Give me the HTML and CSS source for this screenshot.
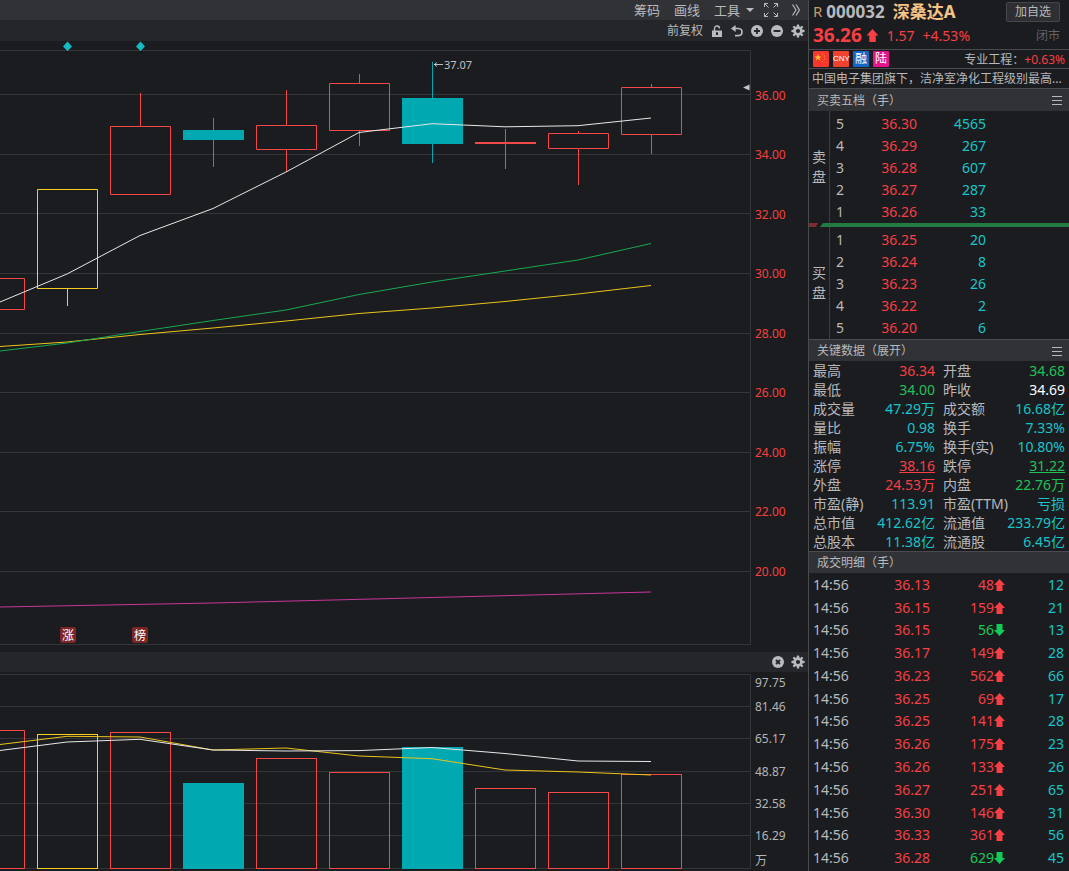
FILE: index.html
```html
<!DOCTYPE html>
<html lang="zh-CN">
<head>
<meta charset="utf-8">
<title>深桑达A 000032</title>
<link rel="stylesheet" href="styles.css">
</head>
<body>
<svg class="defs" aria-hidden="true">
  <symbol id="gear" viewBox="0 0 14 14">
    <g fill="currentColor">
      <rect x="5.8" y="0.4" width="2.4" height="13.2" rx="0.6"/>
      <rect x="5.8" y="0.4" width="2.4" height="13.2" rx="0.6" transform="rotate(45 7 7)"/>
      <rect x="5.8" y="0.4" width="2.4" height="13.2" rx="0.6" transform="rotate(90 7 7)"/>
      <rect x="5.8" y="0.4" width="2.4" height="13.2" rx="0.6" transform="rotate(135 7 7)"/>
      <circle cx="7" cy="7" r="4.7"/>
    </g>
    <circle cx="7" cy="7" r="2.1" fill="#25262a"/>
  </symbol>
  <symbol id="up" viewBox="0 0 11 12"><path d="M5.5 0L11 6H8.5V12H2.5V6H0Z" fill="currentColor"/></symbol>
  <symbol id="down" viewBox="0 0 11 12"><path d="M5.5 12L11 6H8.5V0H2.5V6H0Z" fill="currentColor"/></symbol>
  <symbol id="menu" viewBox="0 0 10 10"><path d="M0 1.5H10M0 5.5H10M0 9.5H10" stroke="currentColor"/></symbol>
</svg>
<div class="app">
  <main class="charts">
    <nav class="bar bar-top">
      <button>筹码</button>
      <button>画线</button>
      <button class="drop">工具<svg width="8" height="4" viewBox="0 0 8 4"><path d="M0 0H8L4 4Z" fill="currentColor"/></svg></button>
      <button aria-label="全屏"><svg width="14" height="14" viewBox="0 0 14 14" fill="none" stroke="currentColor"><path d="M0.5 4V0.5H4M10 0.5H13.5V4M13.5 10V13.5H10M4 13.5H0.5V10M0.5 0.5L4.5 4.5M13.5 0.5L9.5 4.5M13.5 13.5L9.5 9.5M0.5 13.5L4.5 9.5"/></svg></button>
      <button aria-label="更多"><svg width="8" height="12" viewBox="0 0 8 12" fill="none" stroke="currentColor" stroke-width="1.2"><path d="M0.5 0.5L4 6L0.5 11.5M4 0.5L7.5 6L4 11.5"/></svg></button>
    </nav>
    <div class="bar bar-sub">
      <button class="adjust">前复权</button>
      <button aria-label="锁定"><svg width="12" height="12" viewBox="0 0 12 12"><path d="M3.5 6V3.5Q3.5 1 6 1Q8.5 1 8.5 3.5" fill="none" stroke="currentColor" stroke-width="1.4"/><path fill-rule="evenodd" fill="currentColor" d="M1 5.5H11V12H1ZM5 7.3V10H7V7.3Z"/></svg></button>
      <button aria-label="撤销"><svg width="12" height="12" viewBox="0 0 12 12"><path d="M2 3.5H7.5Q11 3.8 11 7Q11 10.3 7.5 10.7H4" fill="none" stroke="currentColor" stroke-width="1.7"/><path d="M0 3.5L4.6 0V7Z" fill="currentColor"/></svg></button>
      <button aria-label="放大"><svg width="12" height="12" viewBox="0 0 12 12"><circle cx="6" cy="6" r="6" fill="currentColor"/><path d="M3 6H9M6 3V9" stroke="#25262a" stroke-width="1.8"/></svg></button>
      <button aria-label="缩小"><svg width="12" height="12" viewBox="0 0 12 12"><circle cx="6" cy="6" r="6" fill="currentColor"/><path d="M2.6 6H9.4" stroke="#25262a" stroke-width="2"/></svg></button>
      <button aria-label="设置"><svg width="14" height="14"><use href="#gear"/></svg></button>
    </div>
    <svg class="plot" viewBox="0 41 808 611" role="img" aria-label="K线图">
      <path class="grid" d="M0 50.5H750.5V644.5H0M0 94.5H750M0 154.5H750M0 213.5H750M0 273.5H750M0 333.5H750M0 392.5H750M0 452.5H750M0 511.5H750M0 571.5H750"/>
      <path class="mark" d="M67.5 41.5L72 46.5L67.5 51L63 46.5ZM140.5 41.5L145 46.5L140.5 51L136 46.5Z"/>
      <path class="pointer" d="M743 87.5L749.5 84.5V90.5Z"/>
      <g class="rise">
        <path d="M-1 278.5H24.5V309.5H-1"/>
        <path d="M110.5 126.5H170.5V194.5H110.5ZM140.5 93V126"/>
        <path d="M256.5 125.5H316.5V149.5H256.5ZM286.5 90V125M286.5 150V172"/>
        <path d="M329.5 83.5H389.5V130.5H329.5ZM359.5 74V83M359.5 131V146"/>
        <path d="M505.5 129V169"/>
        <path d="M475 143H536" stroke-width="2"/>
        <path d="M548.5 133.5H608.5V148.5H548.5ZM578.5 131V133M578.5 149V185"/>
        <path d="M621.5 87.5H681.5V134.5H621.5ZM651.5 84V87M651.5 135V154"/>
      </g>
      <path class="limit" d="M37.5 189.5H97.5V288.5H37.5ZM67.5 289V306"/>
      <g class="fall">
        <rect x="183" y="130" width="61" height="10"/><rect x="213" y="118" width="1" height="49"/>
        <rect x="402" y="98" width="61" height="46"/><rect x="432" y="62" width="1" height="101"/>
      </g>
      <polyline class="ma ma-pink" points="0,607 213,603 432,597.5 651,592"/>
      <polyline class="ma ma-yellow" points="0,346.5 67,342 140,334.5 213,328 286,321 359,313.5 432,308 505,301.5 578,294 651,285.5"/>
      <polyline class="ma ma-green" points="0,351 67,343 140,331.5 213,320.5 286,310 359,294.5 432,282 505,271 578,260 651,243.5"/>
      <polyline class="ma ma-white" points="0,302 67,274 140,235.5 213,208.5 286,172 359,132.5 432,123.7 505,126.8 578,125.7 651,118"/>
      <path class="arrow" d="M434 64.5H443M437 62.5L434.5 64.5L437 66.5"/>
      <text class="high" x="444" y="69">37.07</text>
      <g class="badge"><rect x="60" y="627" width="16" height="16" rx="2"/><text x="68" y="640">涨</text><rect x="132" y="627" width="16" height="16" rx="2"/><text x="140" y="640">榜</text></g>
      <g class="axis price">
        <text x="755" y="100">36.00</text><text x="755" y="159">34.00</text><text x="755" y="219">32.00</text>
        <text x="755" y="278">30.00</text><text x="755" y="338">28.00</text><text x="755" y="397">26.00</text>
        <text x="755" y="457">24.00</text><text x="755" y="516">22.00</text><text x="755" y="576">20.00</text>
      </g>
    </svg>
    <div class="bar bar-volume">
      <button aria-label="关闭"><svg width="12" height="12" viewBox="0 0 12 12"><circle cx="6" cy="6" r="6" fill="currentColor"/><path d="M4 4L8 8M8 4L4 8" stroke="#25262a" stroke-width="1.8"/></svg></button>
      <button aria-label="设置"><svg width="14" height="14"><use href="#gear"/></svg></button>
    </div>
    <svg class="plot" viewBox="0 672 808 199" role="img" aria-label="成交量">
      <path class="grid" d="M0 674.5H750.5V868.5H0M0 706.5H750M0 738.5H750M0 771.5H750M0 803.5H750M0 835.5H750"/>
      <g class="rise">
        <path d="M-1 730.5H24.5V868.5H-1"/>
        <rect x="110.5" y="732.5" width="60" height="136"/>
        <rect x="256.5" y="758.5" width="60" height="110"/>
        <rect x="329.5" y="772.5" width="60" height="96"/>
        <rect x="475.5" y="788.5" width="60" height="80"/>
        <rect x="548.5" y="792.5" width="60" height="76"/>
        <rect x="621.5" y="774.5" width="60" height="94"/>
      </g>
      <rect class="limit" x="37.5" y="734.5" width="60" height="134"/>
      <g class="fall"><rect x="183" y="783" width="61" height="86"/><rect x="402" y="747" width="61" height="122"/></g>
      <polyline class="ma ma-yellow" points="0,744.5 67,736.3 140,737 213,750 286,748 359,756 432,758.7 505,770 578,772 651,775"/>
      <polyline class="ma ma-white" points="0,750.5 67,742 140,739.3 213,750 286,751 359,750.6 432,747.5 505,753.5 578,761 651,761.5"/>
      <g class="axis">
        <text x="755" y="687">97.75</text><text x="755" y="711">81.46</text><text x="755" y="743">65.17</text>
        <text x="755" y="776">48.87</text><text x="755" y="808">32.58</text><text x="755" y="840">16.29</text><text x="755" y="865">万</text>
      </g>
    </svg>
  </main>

  <aside class="quote">
    <header class="head">
      <div class="line">
        <span class="flag-r">R</span><h1><span class="code">000032</span><span class="name">深桑达A</span></h1>
        <button class="add">加自选</button>
      </div>
      <div class="line red">
        <strong class="last">36.26</strong><svg class="big-up" width="13" height="13" viewBox="0 0 11 12"><use href="#up"/></svg>
        <span class="diff">1.57</span><span>+4.53%</span><span class="state">闭市</span>
      </div>
    </header>
    <div class="tags">
      <svg class="tag" width="16" height="16" viewBox="0 0 16 16" role="img" aria-label="中国"><rect width="16" height="16" rx="1" fill="#f8382f"/><path d="M5 3L6 5.5H8.5L6.5 7L7.2 9.5L5 8L2.8 9.5L3.5 7L1.5 5.5H4Z" fill="#ffc52b"/><path d="M9 2.5h1v1H9zM11 4.5h1v1H11zM11 7.5h1v1H11zM9 10h1v1H9z" fill="#ff9a2b"/></svg>
      <span class="tag cny">CNY</span><span class="tag rong">融</span><span class="tag lu">陆</span>
      <span class="industry">专业工程：</span><span class="red">+0.63%</span>
    </div>
    <p class="about">中国电子集团旗下，洁净室净化工程级别最高...</p>

    <h2 class="section">买卖五档（手）<button aria-label="菜单"><svg width="10" height="10"><use href="#menu"/></svg></button></h2>
    <div class="book">
      <div class="side">卖盘</div>
      <table>
        <tr><td>5</td><td class="red">36.30</td><td class="cyan">4565</td><td></td></tr>
        <tr><td>4</td><td class="red">36.29</td><td class="cyan">267</td><td></td></tr>
        <tr><td>3</td><td class="red">36.28</td><td class="cyan">607</td><td></td></tr>
        <tr><td>2</td><td class="red">36.27</td><td class="cyan">287</td><td></td></tr>
        <tr><td>1</td><td class="red">36.26</td><td class="cyan">33</td><td></td></tr>
      </table>
    </div>
    <svg class="ratio" height="4" role="img" aria-label="买卖力量对比"><rect width="100%" height="4" fill="#237b43"/><path d="M0 0H14L11 4H0Z" fill="#1b1c1f"/><path d="M0 0H9L7 4H0Z" fill="#7b2d33"/></svg>
    <div class="book">
      <div class="side">买盘</div>
      <table>
        <tr><td>1</td><td class="red">36.25</td><td class="cyan">20</td><td></td></tr>
        <tr><td>2</td><td class="red">36.24</td><td class="cyan">8</td><td></td></tr>
        <tr><td>3</td><td class="red">36.23</td><td class="cyan">26</td><td></td></tr>
        <tr><td>4</td><td class="red">36.22</td><td class="cyan">2</td><td></td></tr>
        <tr><td>5</td><td class="red">36.20</td><td class="cyan">6</td><td></td></tr>
      </table>
    </div>

    <h2 class="section">关键数据（展开）<button aria-label="菜单"><svg width="10" height="10"><use href="#menu"/></svg></button></h2>
    <table class="keys">
      <tr><th>最高</th><td class="red">36.34</td><th>开盘</th><td class="green">34.68</td></tr>
      <tr><th>最低</th><td class="green">34.00</td><th>昨收</th><td class="white">34.69</td></tr>
      <tr><th>成交量</th><td>47.29万</td><th>成交额</th><td>16.68亿</td></tr>
      <tr><th>量比</th><td>0.98</td><th>换手</th><td>7.33%</td></tr>
      <tr><th>振幅</th><td>6.75%</td><th>换手(实)</th><td>10.80%</td></tr>
      <tr><th>涨停</th><td class="red"><u>38.16</u></td><th>跌停</th><td class="green"><u>31.22</u></td></tr>
      <tr><th>外盘</th><td class="red">24.53万</td><th>内盘</th><td class="green">22.76万</td></tr>
      <tr><th>市盈(静)</th><td>113.91</td><th>市盈(TTM)</th><td>亏损</td></tr>
      <tr><th>总市值</th><td>412.62亿</td><th>流通值</th><td>233.79亿</td></tr>
      <tr><th>总股本</th><td>11.38亿</td><th>流通股</th><td>6.45亿</td></tr>
    </table>

    <h2 class="section">成交明细（手）</h2>
    <div class="trades-wrap">
    <table class="trades">
      <tr><td>14:56</td><td>36.13</td><td class="red">48<svg><use href="#up"/></svg></td><td>12</td></tr>
      <tr><td>14:56</td><td>36.15</td><td class="red">159<svg><use href="#up"/></svg></td><td>21</td></tr>
      <tr><td>14:56</td><td>36.15</td><td class="lime">56<svg><use href="#down"/></svg></td><td>13</td></tr>
      <tr><td>14:56</td><td>36.17</td><td class="red">149<svg><use href="#up"/></svg></td><td>28</td></tr>
      <tr><td>14:56</td><td>36.23</td><td class="red">562<svg><use href="#up"/></svg></td><td>66</td></tr>
      <tr><td>14:56</td><td>36.25</td><td class="red">69<svg><use href="#up"/></svg></td><td>17</td></tr>
      <tr><td>14:56</td><td>36.25</td><td class="red">141<svg><use href="#up"/></svg></td><td>28</td></tr>
      <tr><td>14:56</td><td>36.26</td><td class="red">175<svg><use href="#up"/></svg></td><td>23</td></tr>
      <tr><td>14:56</td><td>36.26</td><td class="red">133<svg><use href="#up"/></svg></td><td>26</td></tr>
      <tr><td>14:56</td><td>36.27</td><td class="red">251<svg><use href="#up"/></svg></td><td>65</td></tr>
      <tr><td>14:56</td><td>36.30</td><td class="red">146<svg><use href="#up"/></svg></td><td>31</td></tr>
      <tr><td>14:56</td><td>36.33</td><td class="red">361<svg><use href="#up"/></svg></td><td>56</td></tr>
      <tr><td>14:56</td><td>36.28</td><td class="lime">629<svg><use href="#down"/></svg></td><td>45</td></tr>
    </table>
    </div>
  </aside>
</div>
</body>
</html>
```

FILE: styles.css
```css
* { box-sizing: border-box; }
body {
  margin: 0;
  background: #1b1c1f;
  color: #b8b9bc;
  font: 14px/19px "Noto Sans", "Noto Sans CJK SC", sans-serif;
}
button {
  padding: 0;
  border: 0;
  background: none;
  color: inherit;
  font: inherit;
  display: flex;
  align-items: center;
}
svg { display: block; flex: none; }
.defs { position: absolute; width: 0; height: 0; }
.app { display: grid; grid-template-columns: minmax(0, 1fr) 261px; min-height: 100vh; }

/* charts */
.bar { display: flex; justify-content: flex-end; align-items: center; background: #25262a; color: #b9babd; }
.bar-top { height: 20px; gap: 14px; padding-right: 8px; background: #313236; font-size: 13px; }
.bar-top .drop { gap: 6px; margin-right: -4px; }
.bar-sub { height: 21px; gap: 8px; padding-right: 3px; font-size: 12px; }
.bar-volume { height: 20px; gap: 7px; padding-right: 3px; }
.plot { width: 100%; height: auto; }
.grid { fill: none; stroke: #343538; }
.mark { fill: #13bcc4; }
.pointer { fill: #c4c5c8; }
.rise { fill: none; stroke: #f24848; }
.limit { fill: none; stroke: #f6cf1f; }
.fall { fill: #00a9b2; }
.ma { fill: none; stroke-width: 1; }
.ma-white { stroke: #e8e8ea; }
.ma-yellow { stroke: #eac41c; }
.ma-green { stroke: #17a952; }
.ma-pink { stroke: #c9359a; }
.arrow { fill: none; stroke: #c0c1c4; }
.high { fill: #c0c1c4; font: 11px "Noto Sans", sans-serif; }
.badge rect { fill: #7a2628; }
.badge text { fill: #fff; font-size: 12px; text-anchor: middle; }
.axis { fill: #b4b5b8; font-size: 12px; }
.price { fill: #f5403f; }

/* quote panel */
.quote { display: flex; flex-direction: column; border-left: 1px solid #4a4b4f; }
.red { color: #f73f45; }
.cyan { color: #17c4c9; }
.green { color: #20c05a; }
.lime { color: #13cb58; }
.white { color: #fff; }
.head { height: 50px; padding: 0 9px 0 4px; border-bottom: 1px solid #4a4b4f; }
.line { display: flex; align-items: center; height: 23px; }
.line + .line { height: 25px; }
.flag-r { color: #c69a63; font-size: 15px; margin-right: 4px; }
h1 { display: flex; gap: 8px; margin: 0; font-size: 17px; }
.name { color: #f6c387; }
.add { margin-left: auto; height: 20px; padding: 0 8px; border: 1px solid #45464a; border-radius: 2px; background: #2e2f33; font-size: 12px; }
.last { font-size: 19px; }
.big-up { margin: 0 8px 0 4px; }
.diff { margin-right: 8px; }
.state { margin-left: auto; color: #626367; font-size: 12px; }
.tags { display: flex; align-items: center; gap: 4px; height: 19px; padding: 0 4px; border-bottom: 1px solid #4a4b4f; font-size: 12px; }
.tag { width: 16px; height: 16px; border-radius: 1px; color: #fff; line-height: 16px; text-align: center; }
.cny { background: #f0412f; font: 8px/16px "Liberation Sans Narrow", "Liberation Sans", sans-serif; }
.rong { background: #1667c4; }
.lu { background: #e3148a; }
.industry { margin-left: auto; }
.industry + .red { margin-left: -4px; }
.about { height: 20px; margin: 0; padding: 0 3px; border-bottom: 1px solid #4a4b4f; font-size: 12px; white-space: nowrap; overflow: hidden; }
.section { display: flex; justify-content: space-between; align-items: center; height: 22px; margin: 0; padding: 0 7px 0 8px; background: #313236; font-size: 12px; font-weight: 400; }
table { border-collapse: collapse; table-layout: fixed; width: 100%; }
td, th { padding: 0; font-weight: 400; white-space: nowrap; }
.book { display: flex; }
.side { flex: none; display: flex; align-items: center; width: 21px; padding: 0 3px; border-right: 1px solid #3c3d41; line-height: 20px; word-break: break-all; }
.book table { margin: 1px 0; }
.book td { height: 22px; text-align: right; }
.book td:nth-child(1) { width: 14px; }
.book td:nth-child(2) { width: 73px; }
.book td:nth-child(3) { width: 69px; }
.ratio { width: 100%; }
.ratio + .book + .section, .keys + .section { border-top: 1px solid #4a4b4f; }
.keys th { height: 19px; padding-left: 4px; text-align: left; }
.keys td { padding-right: 4px; text-align: right; color: #17c4c9; }
.keys td.red { color: #f73f45; }
.keys td.green { color: #20c05a; }
.keys td.white { color: #fff; }
.trades-wrap { flex: 1; display: flex; padding-bottom: 2px; }
.trades td { text-align: right; }
.trades td:nth-child(1) { padding-left: 4px; text-align: left; }
.trades td:nth-child(2) { width: 56px; color: #f73f45; }
.trades td:nth-child(3) { width: 75px; }
.trades td:nth-child(4) { width: 64px; padding-right: 5px; color: #17c4c9; }
.trades svg { display: inline-block; width: 11px; height: 12px; vertical-align: -1px; }
```
